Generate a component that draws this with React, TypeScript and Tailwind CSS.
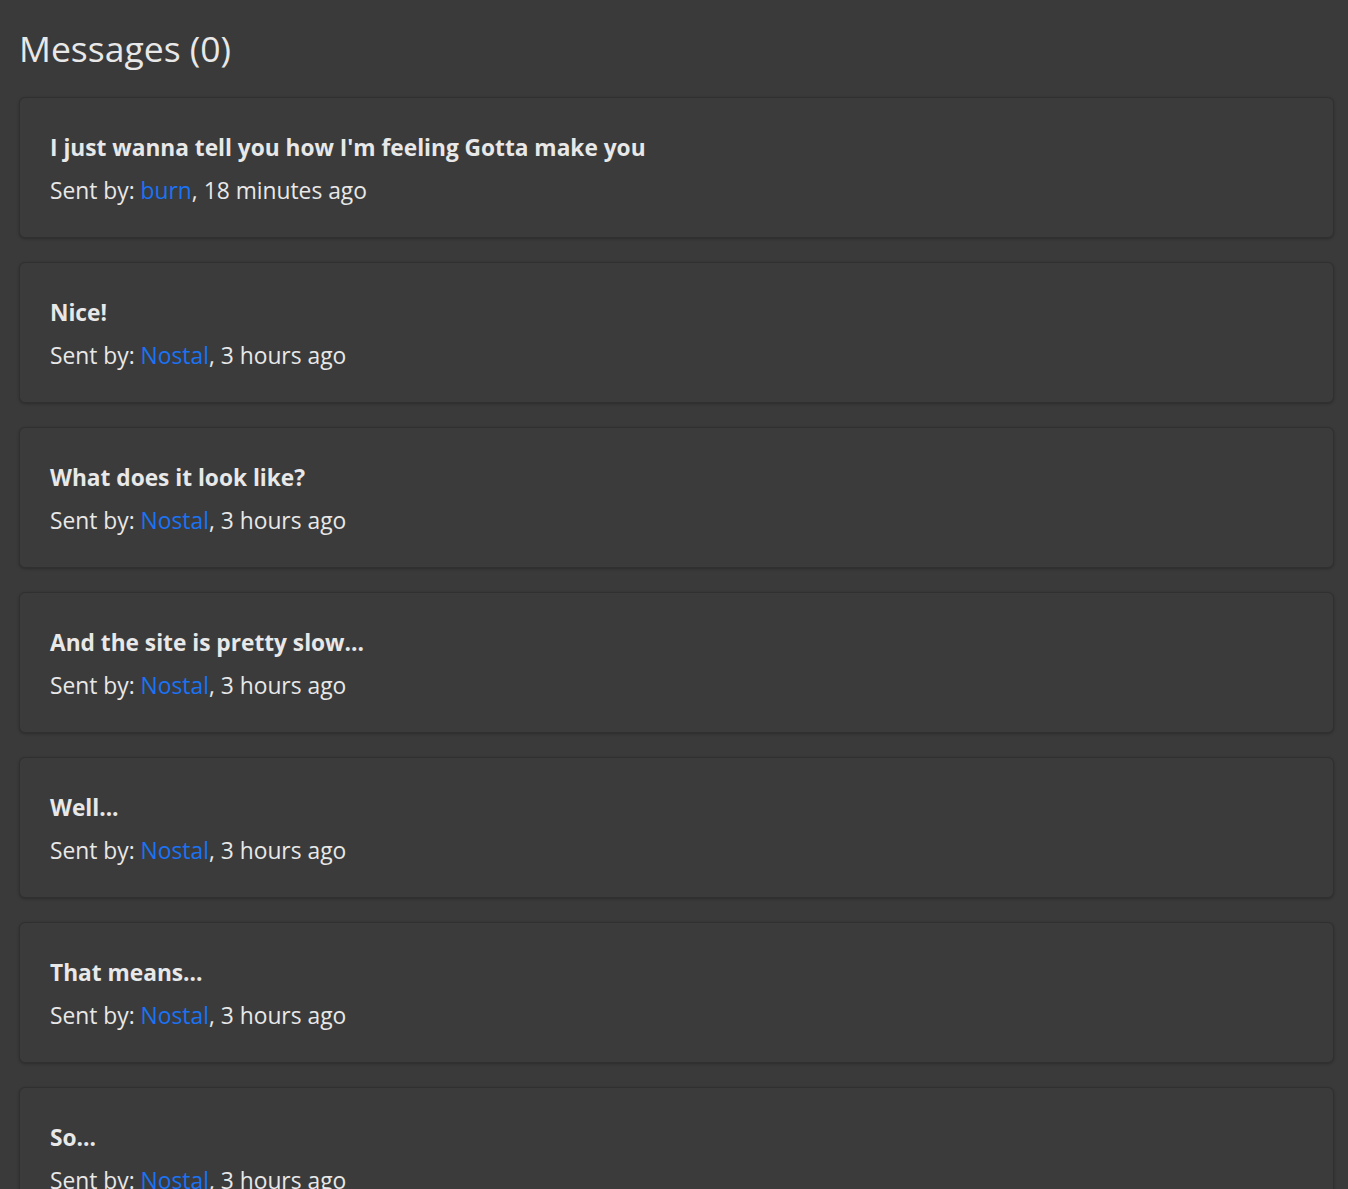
const messages = [
  { text: "I just wanna tell you how I'm feeling Gotta make you", from: "burn", when: "18 minutes ago" },
  { text: "Nice!", from: "Nostal", when: "3 hours ago" },
  { text: "What does it look like?", from: "Nostal", when: "3 hours ago" },
  { text: "And the site is pretty slow...", from: "Nostal", when: "3 hours ago" },
  { text: "Well...", from: "Nostal", when: "3 hours ago" },
  { text: "That means...", from: "Nostal", when: "3 hours ago" },
  { text: "So...", from: "Nostal", when: "3 hours ago" },
];

const App = () => {
  return (
    <div className="min-h-screen bg-[#3a3a3a] text-[#e8e8e8] font-['Open_Sans',sans-serif] pl-[19px] pr-[14px] pt-[26px] pb-10">
      <h2 className="text-[35.5px] leading-[44px] font-normal mb-[27px]">Messages (0)</h2>
      <div className="flex flex-col gap-[24px]">
        {messages.map((m, i) => (
          <div
            key={i}
            className="bg-[#3b3b3b] border border-[#303030] rounded-[6px] shadow-[0_1px_3px_rgba(0,0,0,0.25)] pl-[30px] pt-[35px] pb-[28px]"
          >
            <div className="text-[22.7px] leading-[30px] font-bold">{m.text}</div>
            <div className="text-[22.8px] leading-[36px] mt-[10px]">
              Sent by: <a className="text-[#1a73f5]">{m.from}</a>, {m.when}
            </div>
          </div>
        ))}
      </div>
    </div>
  );
};

export default App;
